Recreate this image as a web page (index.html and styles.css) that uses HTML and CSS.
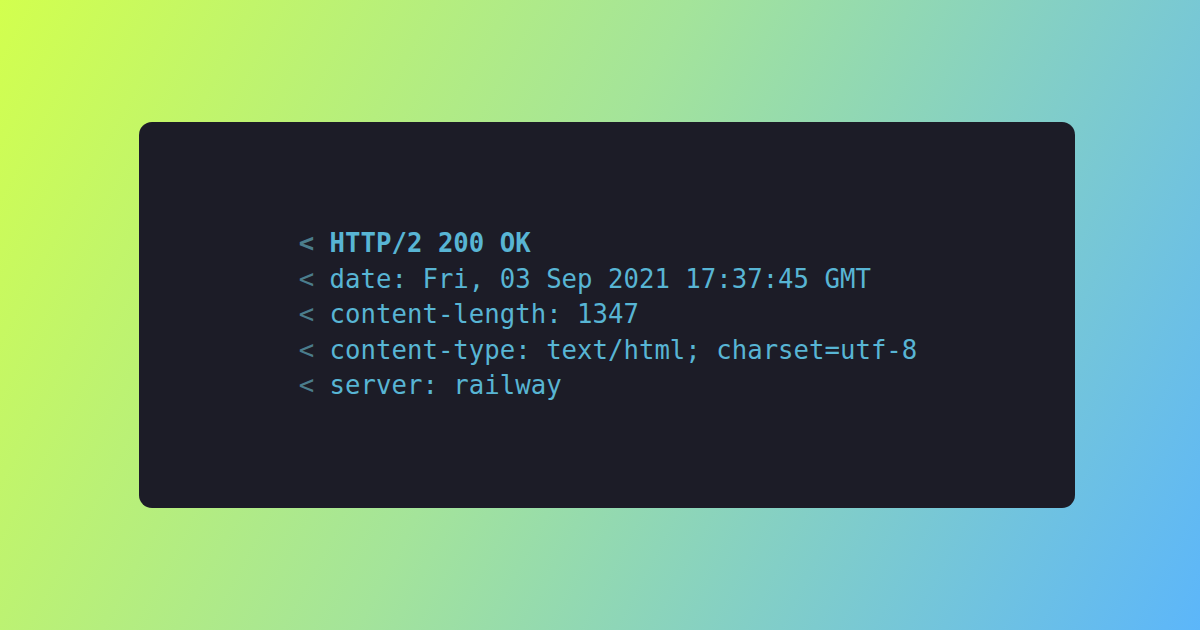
FILE: index.html
```html
<!DOCTYPE html>
<html>
<head>
<meta charset="utf-8">
<link rel="stylesheet" href="styles.css">
</head>
<body>
<div class="stage">
  <div class="card">
    <pre class="code"><span class="line bold"><span class="mark">&lt;</span> HTTP/2 200 OK</span>
<span class="line"><span class="mark">&lt;</span> date: Fri, 03 Sep 2021 17:37:45 GMT</span>
<span class="line"><span class="mark">&lt;</span> content-length: 1347</span>
<span class="line"><span class="mark">&lt;</span> content-type: text/html; charset=utf-8</span>
<span class="line"><span class="mark">&lt;</span> server: railway</span></pre>
  </div>
</div>
</body>
</html>
```
FILE: styles.css
```css
html, body {
  margin: 0;
  padding: 0;
}
.stage {
  width: 1200px;
  height: 630px;
  box-sizing: border-box;
  padding: 122px 125px 122px 139px;
  background: linear-gradient(118deg, #d2ff4e 0%, #a4e49a 45%, #5cb6fa 100%);
}
.card {
  height: 100%;
  background: #1c1c27;
  border-radius: 13px;
  display: flex;
  align-items: center;
  justify-content: center;
}
.code {
  margin: 0;
  font-family: "DejaVu Sans Mono", monospace;
  font-size: 25.7px;
  line-height: 35.5px;
  color: #58b5d4;
  padding-left: 2px;
}
.bold {
  font-weight: bold;
}
.mark {
  color: #4b7d8c;
}
```
